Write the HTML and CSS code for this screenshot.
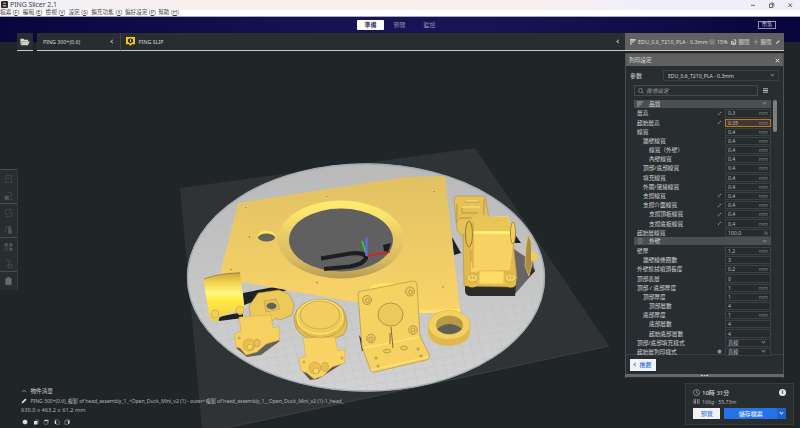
FILE: index.html
```html
<!DOCTYPE html>
<html lang="zh-Hant">
<head>
<meta charset="utf-8">
<title>PING Slicer 2.1</title>
<link rel="stylesheet" href="styles.css">
</head>
<body>
<svg class="scene" viewBox="0 0 800 428" aria-hidden="true">
  <defs>
    <pattern id="grid" width="10" height="8" patternUnits="userSpaceOnUse" patternTransform="matrix(1 -.15 .25 1 0 0)"><path d="M0 0H10M0 0V8" stroke="#b2b4b5" stroke-width=".4" fill="none"/></pattern>
    <linearGradient id="bed" x2="0" y2="1"><stop stop-color="#b9b9b9"/><stop offset="1" stop-color="#d2d2d2"/></linearGradient>
    <linearGradient id="gold" x2="0" y2="1"><stop stop-color="#e1c164"/><stop offset="1" stop-color="#fad468"/></linearGradient>
    <linearGradient id="cone" x2="0" y2="1"><stop stop-color="#ffec70"/><stop offset=".2" stop-color="#fbe26c"/><stop offset=".45" stop-color="#e8ca66"/><stop offset=".75" stop-color="#dbbc60"/><stop offset="1" stop-color="#b69c53"/></linearGradient>
    <linearGradient id="tube" x2="0" y2="1"><stop stop-color="#c9a33f"/><stop offset=".2" stop-color="#f3d34d"/><stop offset=".42" stop-color="#fff886"/><stop offset=".55" stop-color="#ffec42"/><stop offset="1" stop-color="#eeca50"/></linearGradient>
  </defs>
  <path d="M180 188L475 148 609 346 230 428H202Z" fill="#2f3336"/>
  <path d="M609 346L225 428" stroke="#3a3e40" fill="none"/>
  <ellipse cx="366" cy="277.5" rx="179" ry="114" fill="url(#bed)"/>
  <ellipse cx="366" cy="277.5" rx="178.5" ry="113.5" fill="url(#grid)" stroke="#9fabae" stroke-width="1.3"/>
  <path d="M243 293L274 287 287 290 244 305ZM452 237L461 253 454 255ZM514 233L521 243 512 243Z" fill="#202122"/>
  <path d="M238 203L405 177 445 176 453 250 460 309 459 313 418 313 360 303 219 278Z" fill="url(#gold)"/>
  <path d="M418 310L460 309V313H419Z" fill="#ffe367"/>
  <ellipse cx="341" cy="239.500" rx="63" ry="39" fill="url(#cone)"/>
  <ellipse cx="341" cy="240" rx="52" ry="31.500" fill="#606061"/>
  <path d="M321 258.500L350 253.500Q366 252 366 258 364 264 350 266.500L324 269" fill="none" stroke="#1d1e1f" stroke-width="4.200"/>
  <path d="M383 245L391 243 388 252 384 251Z" fill="#1d1e1f"/>
  <ellipse cx="266.500" cy="236" rx="9" ry="5" fill="#ffe868"/><ellipse cx="266.500" cy="237.500" rx="8.500" ry="4" fill="#666458"/>
  <g fill="#9e8646" stroke="#ffe979" stroke-width=".6"><circle cx="246" cy="207.500" r="1.100"/><circle cx="327" cy="196.500" r="1.100"/><circle cx="249.500" cy="237" r="1.300"/><circle cx="231" cy="269.500" r="1.300"/><circle cx="317" cy="282.500" r="1.300"/><circle cx="408" cy="182.500" r="1"/><circle cx="434" cy="191.500" r="1.200"/><circle cx="443" cy="287" r="1.200"/></g>
  <g fill="none" stroke-width="1.600"><path d="M367 256L390 252" stroke="#f01515"/><path d="M367 256L362 241" stroke="#17e51c"/><path d="M366.500 256V238" stroke="#6566f5" stroke-width="2.200"/></g>

  <path d="M218 317L219 321 243 318V312Z" fill="#202020"/>
  <path d="M203.500 279Q219 273 240 272.500L244.500 309Q245 315 239 315L236 311 220 317Q218 322 213 322L210 319 206 296Z" fill="url(#tube)"/>
  <path d="M204 279Q220 273 240 273" stroke="#907a3a" fill="none" stroke-width=".7"/>
  <circle cx="215" cy="314" r="4" fill="#f4cf58" stroke="#c2a146" stroke-width=".6"/><circle cx="240" cy="310" r="4" fill="#f4cf58" stroke="#c2a146" stroke-width=".6"/>
  <path d="M236 348L247 357 261 355 280 341 275 337Z" fill="#666258"/>
  <path d="M258 293L279 290 289 294 294 305 292 315 280 320 276 318 272 321 251 320 249 306Z" fill="#edc95a" stroke="#a88e43" stroke-width=".6"/>
  <path d="M264 301L276 299 280 309 266 312Z" fill="#e7c157" stroke="#ae944b" stroke-width=".6"/><ellipse cx="271.500" cy="306" rx="5" ry="3.300" fill="#666157"/>
  <path d="M239 317L271 315 273 328 279 326 279.500 340 266 344 257 352 246 355 240 348 236 347 234 334 241 331Z" fill="#f6d060" stroke="#c9a74e" stroke-width=".5"/>
  <g fill="#e8bf50" stroke="#b09244" stroke-width=".5"><ellipse cx="249" cy="345" rx="6" ry="6"/><circle cx="250" cy="347" r="2.800" fill="#f9d566"/><ellipse cx="257" cy="343" rx="3" ry="4"/><circle cx="239" cy="338" r="1.200"/></g>

  <path d="M302 371L310 380 318 379 345 362Z" fill="#5c5951"/>
  <path d="M294 317Q298 301 320 299 340 300 345 313 350 327 343 335 330 342 306 337 294 332 294 317Z" fill="#e8c153" stroke="#aa8d40" stroke-width=".7"/>
  <ellipse cx="320.500" cy="320" rx="24.500" ry="17.500" fill="none" stroke="#b69a48" stroke-width=".8"/><ellipse cx="320" cy="317" rx="23" ry="17" fill="#f0cb5a" stroke="#fff17b" stroke-width="1"/><ellipse cx="320" cy="315" rx="19.500" ry="14" fill="#f4cf60" stroke="#bd9e49" stroke-width=".7"/>
  <path d="M303 338L335 337 338 351 345 349 345 363 332 367 323 376 314 379 307 373 301 371 299 358 306 356Z" fill="#f9d464" stroke="#c9a74e" stroke-width=".5"/>
  <g fill="#e8c052" stroke="#b09244" stroke-width=".5"><circle cx="315" cy="368" r="6"/><circle cx="316" cy="371" r="3" fill="#fad668"/><ellipse cx="325" cy="367" rx="3.500" ry="4.500"/><circle cx="304" cy="362" r="1.200"/><circle cx="342" cy="358" r="1.300"/></g>

  <path d="M359 335L362 351 368 348Z" fill="#333"/>
  <ellipse cx="386" cy="289" rx="17" ry="6" fill="#ffe466"/>
  <path d="M358 294Q358 291 362 291L413 281Q417 281 417 285L420 336 429 354Q431 359 426 360L375 372Q371 373 370 369L362 347Z" fill="#f6d262" stroke="#af9548" stroke-width=".7"/>
  <path d="M364 348L419 337 M371 370L428 357" stroke="#ffec79" stroke-width="1" fill="none"/>
  <ellipse cx="390.500" cy="314.500" rx="12.500" ry="11.500" fill="#edc95b" stroke="#a98f46" stroke-width=".9"/>
  <path d="M391 327L393 348M390 333V344" stroke="#806d38" fill="none"/>
  <g fill="#edc757" stroke="#a08540" stroke-width=".7"><circle cx="367" cy="300" r="4.500"/><circle cx="410" cy="291.500" r="4.500"/><circle cx="371" cy="338.500" r="4.300"/><circle cx="413" cy="330" r="4.300"/><g stroke-width=".6"><circle cx="367.500" cy="300.500" r="2"/><circle cx="410.500" cy="292" r="2"/><circle cx="371" cy="339" r="2"/><circle cx="413" cy="330" r="2"/><ellipse cx="387" cy="351" rx="3.500" ry="2"/><ellipse cx="404" cy="348" rx="3.500" ry="2"/><circle cx="376" cy="358" r="1.200"/><circle cx="378" cy="366" r="1.200"/><circle cx="418" cy="349" r="1.200"/><circle cx="421" cy="356" r="1.200"/></g></g>

  <path d="M428 324V333Q431 346 449 346 468 345 470 333V324Z" fill="#dfb94e"/><ellipse cx="449" cy="325" rx="21" ry="14.500" fill="#f4d061" stroke="#d7b34e" stroke-width=".6"/><ellipse cx="449.500" cy="325" rx="13.500" ry="9.500" fill="#b99a46"/><path d="M437 329Q449 319 462 329 457 334 449 334 441 334 437 329Z" fill="#605e59"/>

  <path d="M511 247L533 262 535 271 515 294 505 296Z" fill="#656565"/><path d="M465 284H516L515 296H471Q465 296 465 290ZM529 277L535 271 531 266Z" fill="#2d2c2a"/>
  <path d="M454 200Q454 196 458 196H485L489 219 484 235 464 238 457 230Z" fill="#e5c157" stroke="#ab9149" stroke-width=".6"/>
  <path d="M465 202H479M462 208V213H478M484 199V215M457 204V223M459 218H477" stroke="#9c8442" stroke-width=".7" fill="none"/><path d="M466 201H478M462 207H480" stroke="#ffe778" fill="none"/>
  <path d="M463 234L512 232 517 278 514 287 464 286Z" fill="#e1b94c" stroke="#ac8e3e" stroke-width=".6"/>
  <path d="M472 217L508 216 514 235 510 270 471 272Z" fill="#f7d263"/><path d="M472 217H508L511 233H471Z" fill="#e9c556"/><path d="M473 232.500H510" stroke="#fff57e" stroke-width="2.500"/>
  <ellipse cx="469" cy="234" rx="3.500" ry="13" fill="#e5bd4b" stroke="#927b39" stroke-width="1"/><ellipse cx="513" cy="233" rx="2.500" ry="11" fill="#f5d15b" stroke="#927b39" stroke-width=".8"/>
  <path d="M473 223V268M471 250V262M498 220V221" stroke="#b19444" stroke-width=".8"/>
  <path d="M467 275H514V285H467Z" fill="#efca58"/><path d="M479 271H504V284H479Z" fill="#ffdc66" stroke="#c9a74a" stroke-width=".6"/>
  <path d="M467 279V285Q472 290 478 285V279ZM505 278V285Q511 290 516 285V278Z" fill="#e7bd4a"/><ellipse cx="472.500" cy="278" rx="5.500" ry="4" fill="#f7d261" stroke="#b29243" stroke-width=".6"/><ellipse cx="510.500" cy="278" rx="5.500" ry="4" fill="#f7d261" stroke="#b29243" stroke-width=".6"/><path d="M471 276V279M474 276V279M509 276V279M512 276V279" stroke="#a2853e" stroke-width=".7"/>
  <path d="M528 235L531 241 532 264 529 276 525 266 526 247Z" fill="#a88d46" stroke="#edca58" stroke-width=".7"/><path d="M531 251L537 254 537 260 531 261Z" fill="#f4cc50"/>
</svg>

<div class="app">
  <header class="titlebar">
    <svg class="logo" viewBox="0 0 8 8"><rect width="8" height="8" rx="1.500" fill="#2a2422"/><path d="M1.500 4.500H6.500L5.500 6.500H2.500Z" fill="#da8a55"/><path d="M2.500 2.500H5.500" stroke="#eee"/></svg>
    <span>PING Slicer 2.1</span>
    <svg class="window-controls" viewBox="0 0 46 8"><g fill="none" stroke="#222" stroke-width=".65"><path d="M1 4.300H5M19.500 3H22.500V6.500H19.500ZM20.500 2.500Q21 1.800 22 1.800 24 1.800 24 4 24 5 23.300 5.500M38.500 2.300L42 6M42 2.300L38.500 6"/></g></svg>
  </header>
  <nav class="menu"><span>檔案 (<u>F</u>)</span><span>編輯 (<u>E</u>)</span><span>檢視 (<u>V</u>)</span><span>設定 (<u>S</u>)</span><span class="wide">擴充功能 (<u>X</u>)</span><span class="wide">偏好設定 (<u>P</u>)</span><span>幫助 (<u>H</u>)</span></nav>
  <div class="stagebar">
    <div class="tabs"><b>準備</b><span>預覽</span><span>監控</span></div>
    <span class="market">市集</span>
  </div>
  <div class="toolbar">
    <button class="open"><svg viewBox="0 0 10 8"><path d="M.5 7V.8H3.500L4.300 1.800H8V3H2.500Z" fill="#ddd"/><path d="M2.700 3.300H9.700L8 7.300H.8Z" fill="#d0d1d1"/></svg></button>
    <div class="printer"><span>PING 300+(0.6)</span><i class="left"></i></div>
    <div class="material"><svg viewBox="0 0 9 9"><path d="M0 0H9V7.200H6L4.500 9 3 7.200H0Z" fill="#ffc40c"/><path d="M2 2.200L4.500 1.200 7 2.200V5L4.500 6.500 2 5Z" fill="#28251b"/><path d="M4.500 2.300V5" stroke="#fff" stroke-width=".8"/></svg><span>PING SLIP</span><i class="left"></i></div>
    <div class="summary">
      <svg viewBox="0 0 7 7"><path d="M0 0H6.500V2H0ZM0 2.700H4.500V4.200H0ZM0 5H2.500V6.500H0Z" fill="#ccc"/></svg><span class="profile">EDU_0.6_T210_PLA - 0.3mm</span>
      <svg viewBox="0 0 7 7"><path d="M1 1H6V6H1ZM2.500 1V6M4.500 1V6M1 3.500H6" stroke="#aaa" stroke-width=".5" fill="none"/></svg><span class="pct">15%</span>
      <svg viewBox="0 0 7 7"><path d="M.5 3H2.500V6H.5ZM3 1H5.500V5H3M2 6H6" stroke="#ddd" fill="none"/></svg><span class="state">關閉</span>
      <svg viewBox="0 0 7 7"><path d="M3.500 .5V6.500M1 3.500H6" stroke="#aaa" stroke-width=".8"/></svg><span class="state">關閉</span>
      <svg viewBox="0 0 7 7"><path d="M1.500 5.500L5 2" stroke="#ddd" stroke-width="1.300"/></svg>
    </div>
  </div>

  <main>
    <aside class="tools">
      <div>
        <svg viewBox="0 0 10 10"><path d="M2 1H8V6L9 9H1L2 7ZM3 5L6 4" /></svg>
        <svg viewBox="0 0 10 10"><path d="M4 1H8V6L9 9H5"/><path class="solid" d="M1 5H5V9H1Z"/></svg>
      </div>
      <div>
        <svg viewBox="0 0 10 10"><path d="M2 1H8L7 4 9 5 8 9H2L3 6 1 5Z"/></svg>
        <svg viewBox="0 0 10 10"><path d="M3 1L1 9M3 1H5"/><path class="solid" d="M5 1H7L9 9H5Z"/></svg>
      </div>
      <div>
        <svg viewBox="0 0 10 10"><path class="solid" d="M1 1H4V4H1ZM6 1H9V4H6ZM6 6H9V9H6Z"/><path d="M1 6H4V9H1Z"/></svg>
        <svg viewBox="0 0 10 10"><path d="M2 1H7L5 5 9 6V9H5V5L2 9"/></svg>
      </div>
      <div>
        <svg viewBox="0 0 10 10"><path class="bin" d="M2 2H4V1H6V2H8V9H2Z"/></svg>
      </div>
    </aside>

    <section class="object">
      <div class="heading"><svg viewBox="0 0 6 6"><path d="M1 4L3 2 5 4" stroke="#aaa" stroke-width=".7" fill="none"/></svg><span>物件清單</span></div>
      <div class="filename"><svg viewBox="0 0 6 6"><path d="M.5 5.500L1 3.700 4.300 .5 5.500 1.700 2.200 5Z" fill="#ddd"/></svg><span>PING 300+(0.6)_複製 of head_assembly_1_^Open_Duck_Mini_v2 (1) - outer^複製 of head_assembly_1__Open_Duck_Mini_v2 (1)-1_head_</span></div>
      <p>630.0 x 463.2 x 61.2 mm</p>
      <div class="views">
        <svg viewBox="0 0 6 6"><path d="M3 .5L5.300 1.800V4.300L3 5.500.700 4.300V1.800Z" fill="#ddd"/></svg>
        <svg viewBox="0 0 6 6"><path d="M1 2H4.500V5.500H1Z" fill="#ddd"/><path d="M2 1H5.500V4.500" stroke="#888" stroke-width=".6" fill="none"/></svg>
        <svg viewBox="0 0 6 6"><path d="M1 2L2 .7H5.500L4.500 2Z" fill="#ddd"/><path d="M1 2H4.500V5.300H1ZM4.500 2L5.500 1V4.300" stroke="#999" stroke-width=".5" fill="none"/></svg>
        <svg viewBox="0 0 6 6"><path d="M.7 1L2.200 2V5.500L.7 4.500Z" fill="#ddd"/><path d="M1 .8H4L5.300 2V5.300H2.200" stroke="#aaa" stroke-width=".5" fill="none"/></svg>
        <svg viewBox="0 0 6 6"><path d="M4 2L5.500 .8V4.300L4 5.500Z" fill="#ddd"/><path d="M4 2H.8V5.300H4M1 1.800L2 .8H5.500" stroke="#aaa" stroke-width=".5" fill="none"/></svg>
      </div>
    </section>

    <div class="right">
      <section class="panel">
        <div class="panel-title"><span>列印設定</span><svg viewBox="0 0 5 5"><path d="M.7 .7L4.300 4.300M4.300 .7L.7 4.300" stroke="#eee" stroke-width=".9"/></svg></div>
        <div class="preset"><span>參數</span><div><span>EDU_0.6_T210_PLA - 0.3mm</span><i class="down"></i></div></div>
        <div class="search"><div><svg viewBox="0 0 6 6"><circle cx="2.500" cy="2.500" r="2"/><path d="M4 4L5.700 5.700"/></svg><em>搜尋設定</em></div><svg class="burger" viewBox="0 0 5 5"><path d="M0 .8H5M0 2.500H5M0 4.200H5" stroke="#ccc" stroke-width=".9"/></svg></div>
        <div class="settings"><div class="rows" id="rows"></div><div class="scroll"></div></div>
        <div class="panel-foot"><button><i class="left"></i>推薦</button></div>
        <div class="grip"><b></b><b></b><b></b></div>
      </section>
      <section class="job">
        <div class="time"><svg viewBox="0 0 7 7"><circle cx="3.500" cy="3.500" r="3"/><path d="M3.500 1.500V3.700L5 4.500"/></svg><b>10時 31分</b><i class="info">i</i></div>
        <div class="weight"><svg viewBox="0 0 7 7"><path d="M1 1V6M6 1V6M2.500 1V6M4.500 1V6M1 3.500H2.500"/></svg><span>166g · 55.73m</span></div>
        <div class="actions"><button class="preview">預覽</button><button class="save">儲存檔案</button><button class="more"><i class="down"></i></button></div>
      </section>
    </div>
  </main>
</div>
<script src="settings.js"></script>
</body>
</html>
```
FILE: styles.css
```css
* { box-sizing: border-box; }
body {
  margin: 0;
  width: 800px;
  height: 428px;
  overflow: hidden;
  background: #202528;
  color: #d4d6d7;
  font: 6px/8px "Noto Sans", "Noto Sans CJK TC", sans-serif;
}
button { border: 0; padding: 0; font: inherit; }
svg { display: block; flex: none; }
p { margin: 0; }
.scene { position: absolute; top: 0; left: 0; width: 800px; height: 428px; }
.app { position: relative; display: flex; flex-direction: column; height: 428px; }

.titlebar { display: flex; align-items: center; height: 10px; padding: 0 0 1px 1px; background: linear-gradient(90deg, #eff3fa, #f9efed 25%, #f9efee 66%, #f0eff9 80%); color: #444; font-size: 7px; }
.titlebar span { margin-left: 2px; letter-spacing: -.09px; }
.logo { width: 7px; height: 7px; }
.window-controls { width: 46px; height: 8px; margin-left: auto; margin-right: 4px; }
.menu { display: flex; height: 7px; background: #fff; border-bottom: 1px solid #aaa8bd; color: #444; font-size: 5.700px; line-height: 5.500px; white-space: nowrap; }
.menu span { width: 22.800px; }
.menu .wide { width: 33.500px; }
.menu u { text-underline-offset: .5px; text-decoration-thickness: .5px; }

.stagebar { display: flex; align-items: flex-start; height: 25px; flex: none; padding-top: 3px; background: linear-gradient(90deg, #08063e, #171455 45%, #181555 60%, #08053c); }
.tabs { display: flex; margin-left: 357px; line-height: 10px; color: #8e8cae; text-align: center; }
.tabs b { width: 27px; height: 10px; border-radius: 1px; background: #fff; color: #171448; font-weight: 500; }
.tabs span { width: 31px; }
.tabs span:last-child { width: 29px; }
.market { width: 18px; height: 8px; margin: 1px 24px 0 auto; border: 1px solid #9290b4; color: #c5c4d9; font-size: 5.500px; line-height: 5.500px; text-align: center; }
.toolbar { display: flex; height: 18px; flex: none; margin: -9px 16px 0 17px; }
.toolbar > * { display: flex; align-items: center; background: #282d30; border-bottom: 1px solid #cbcac6; }
.open { width: 16px; margin-right: 4px; justify-content: center; }
.open svg { width: 10px; height: 8px; }
.printer { width: 84px; padding: 0 6px; justify-content: space-between; border-right: 1px solid #404548; font-size: 5.300px; }
.material { width: 504px; padding: 0 5px; font-size: 5.300px; }
.material svg { width: 9px; height: 9px; margin-right: 3.500px; }
.material .left { margin-left: auto; }
.toolbar .summary { width: 159px; padding-left: 5px; background: #616161; color: #ddd; font-size: 5.400px; white-space: nowrap; }
.summary svg { width: 6px; height: 6px; margin-right: 2px; }
.profile { width: 71px; }
.pct { width: 13.500px; }
.state { width: 14px; }
i.left, i.down { display: inline-block; flex: none; width: 3px; height: 3px; border: solid currentColor; border-width: 0 0 .8px .8px; transform: rotate(45deg); opacity: .8; }
i.down { transform: rotate(-45deg); color: #929799; margin-top: -2px; }

main { display: flex; flex: 1; min-height: 0; }
.tools { width: 18px; height: 121px; margin-top: 118px; background: #282d30; border-right: 1px solid #34393b; border-radius: 0 2px 2px 0; }
.tools div { display: flex; flex-direction: column; gap: 7px; height: 34.100px; padding: 3.500px 4px 0; border-top: 1px solid #494d4f; }
.tools div:last-child { height: 18px; }
.tools svg { width: 9px; height: 10px; }
.tools path { fill: none; stroke: #4b5052; stroke-width: .8; }
.tools .solid { fill: #53585a; }
.tools .bin { fill: #676b6c; stroke: #676b6c; }

.object { align-self: flex-end; width: 340px; margin-left: 3px; height: 42px; color: #aeb1b2; font-size: 5.600px; white-space: nowrap; }
.heading, .filename { display: flex; align-items: center; height: 10px; gap: 3.500px; }
.heading { color: #ccc; }
.object svg { width: 6px; height: 6px; }
.filename { font-size: 5.200px; letter-spacing: -.09px; }
.object p { height: 10px; line-height: 9px; letter-spacing: .05px; }
.views { display: flex; gap: 4.500px; padding: 3px 0 0 1px; }

.right { display: flex; flex-direction: column; width: 175px; margin-left: auto; }
.panel { width: 159px; height: 325px; margin-top: 2px; border: 1px solid #4b5052; border-bottom: 0; background: #282d30; }
.panel-title { display: flex; justify-content: space-between; align-items: center; height: 12px; padding: 0 3px; background: #606060; color: #ddd; font-size: 5.700px; }
.panel-title svg { width: 5px; height: 5px; }
.preset { display: flex; align-items: center; justify-content: space-between; padding: 4px 4px 0; }
.preset div { display: flex; align-items: center; justify-content: space-between; width: 116px; height: 11px; padding: 0 4px; border: 1px solid #393f42; font-size: 5.100px; }
.search { display: flex; align-items: center; padding: 4px 8px 0; gap: 5px; }
.search div { display: flex; align-items: center; gap: 2px; width: 124px; height: 11px; padding-left: 3px; border: 1px solid #444a4d; color: #999; font-size: 5.700px; }
.search svg { width: 6px; height: 6px; fill: none; stroke: #aaa; stroke-width: .6; }
.search .burger { width: 5px; height: 5px; }
.settings { display: flex; gap: 2px; height: 258.500px; padding: 3.700px 0 0 8px; border-bottom: 1px solid #3b4042; }
.rows { width: 137px; }
.scroll { width: 4px; height: 32px; border-radius: 2px; background: #7c8082; }
.row { display: flex; align-items: center; height: 9.180px; padding-left: 3px; font-size: 5.700px; white-space: nowrap; }
.row.level-1 { padding-left: 9px; }
.row.level-2 { padding-left: 15px; }
.row > svg { width: 5px; height: 5px; margin-left: auto; margin-right: 3px; }
.field { display: flex; justify-content: space-between; align-items: center; width: 46px; height: 8.200px; margin-left: auto; padding: 0 2px; border: 1px solid #3a4043; background: #262b2e; font-size: 5.200px; color: #b8bbbc; }
.row > svg + .field { margin-left: 0; }
.field small { font-size: 5px; color: #7e8385; }
.field .down { margin-right: 3px; }
.field.changed { background: #443631; border-color: #b77a1d; }
.section { display: flex; align-items: center; height: 8.180px; margin-bottom: 1px; padding: 0 5px 0 3px; background: #4a4f51; font-size: 5.800px; }
.section svg { width: 6px; height: 6px; margin-right: 6px; }
.section .down { margin-left: auto; }
.panel-foot { height: 19px; padding: 4px; }
.panel-foot button { display: flex; align-items: center; justify-content: center; gap: 2px; width: 26px; height: 12px; background: #f2f3f5; color: #2870df; font-weight: 500; }
.grip { display: flex; justify-content: center; align-items: center; gap: 1px; height: 3px; margin: 0 -1px; background: #686868; }
.grip b { width: 1.500px; height: 1px; background: #ccc; }
.job { width: 109px; height: 42px; margin: 5px 0 0 60px; padding: 4px 7px; border: 1px solid #383d3f; background: #282d30; }
.time, .weight { display: flex; align-items: center; height: 9px; gap: 2px; }
.time b { font-weight: 500; font-size: 6px; }
.job svg { width: 7px; height: 7px; fill: none; stroke: #b9bcbd; stroke-width: .6; }
.weight { color: #aeb1b2; font-size: 5.200px; }
.info { width: 7px; height: 7px; margin-left: auto; border-radius: 50%; background: #e6e6e6; color: #222; font-style: normal; font-weight: 700; font-size: 5px; line-height: 7px; text-align: center; }
.actions { display: flex; margin-top: 2px; }
.actions button { height: 11px; line-height: 10px; }
.preview { width: 28px; margin-right: 4px; background: #f0f1f3; color: #2870df; }
.save { width: 54px; background: #2672e8; color: #fff; }
.more { width: 9px; background: #1d63d0; }
.more i.down { color: #fff; margin: -1px 0 2px; }
```
FILE: settings.js
```js
// Each entry: label, indent level, value, unit, marker
const quality = [
  ["層高", 0, "0.3", "mm", "link"],
  ["起始層高", 0, "0.35", "mm", "link"],
  ["線寬", 0, "0.4", "mm"],
  ["牆壁線寬", 1, "0.4", "mm"],
  ["線寬（外壁）", 2, "0.4", "mm"],
  ["內壁線寬", 2, "0.4", "mm"],
  ["頂部/底部線寬", 1, "0.4", "mm"],
  ["填充線寬", 1, "0.4", "mm"],
  ["外圍/邊緣線寬", 1, "0.4", "mm"],
  ["支撐線寬", 1, "0.4", "mm", "link"],
  ["支撐介面線寬", 1, "0.4", "mm", "link"],
  ["支撐頂板線寬", 2, "0.4", "mm", "link"],
  ["支撐底板線寬", 2, "0.4", "mm", "link"],
  ["起始層線寬", 0, "100.0", "%"]
];
const walls = [
  ["壁厚", 0, "1.2", "mm"],
  ["牆壁線條圈數", 1, "3", ""],
  ["外壁擦拭噴頭長度", 0, "0.2", "mm"],
  ["頂部表層", 0, "0", ""],
  ["頂部 / 底部厚度", 0, "1", "mm"],
  ["頂部厚度", 1, "1", "mm"],
  ["頂部層數", 2, "4", ""],
  ["底部厚度", 1, "1", "mm"],
  ["底部層數", 2, "4", ""],
  ["起始底部層數", 2, "4", ""],
  ["頂部/底部填充樣式", 0, "直線", "select"],
  ["起始層列印樣式", 0, "直線", "select", "dot"]
];
const markers = {
  link: '<svg viewBox="0 0 5 5"><path d="M1 4L4 1M.7 3L2 4.300M3 .7L4.300 2" stroke="#85898b" stroke-width=".8" fill="none"/></svg>',
  dot: '<svg viewBox="0 0 5 5"><circle cx="2.500" cy="2.500" r="1.900" fill="#8e9293"/></svg>'
};
const icons = {
  quality: '<svg viewBox="0 0 6 6"><path d="M0 1H6M0 3H4.500M0 5H2.500" stroke="#aaa" fill="none"/></svg>',
  walls: '<svg viewBox="0 0 6 6"><path d="M1 .5H5V5.500H1ZM2 1.500H4V4.500H2Z" stroke="#85898b" stroke-width=".5" fill="none"/></svg>'
};
function row([label, level, value, unit, marker]) {
  const tail = unit === "select" ? '<i class="down"></i>' : `<small>${unit}</small>`;
  const state = value === "0.35" ? " changed" : "";
  return `<div class="row level-${level}"><span>${label}</span>${markers[marker] || ""}<div class="field${state}"><span>${value}</span>${tail}</div></div>`;
}
function section(name, icon, entries) {
  return `<div class="section">${icons[icon]}<span>${name}</span><i class="down"></i></div>${entries.map(row).join("")}`;
}
document.getElementById("rows").innerHTML = section("品質", "quality", quality) + section("外壁", "walls", walls);
```
